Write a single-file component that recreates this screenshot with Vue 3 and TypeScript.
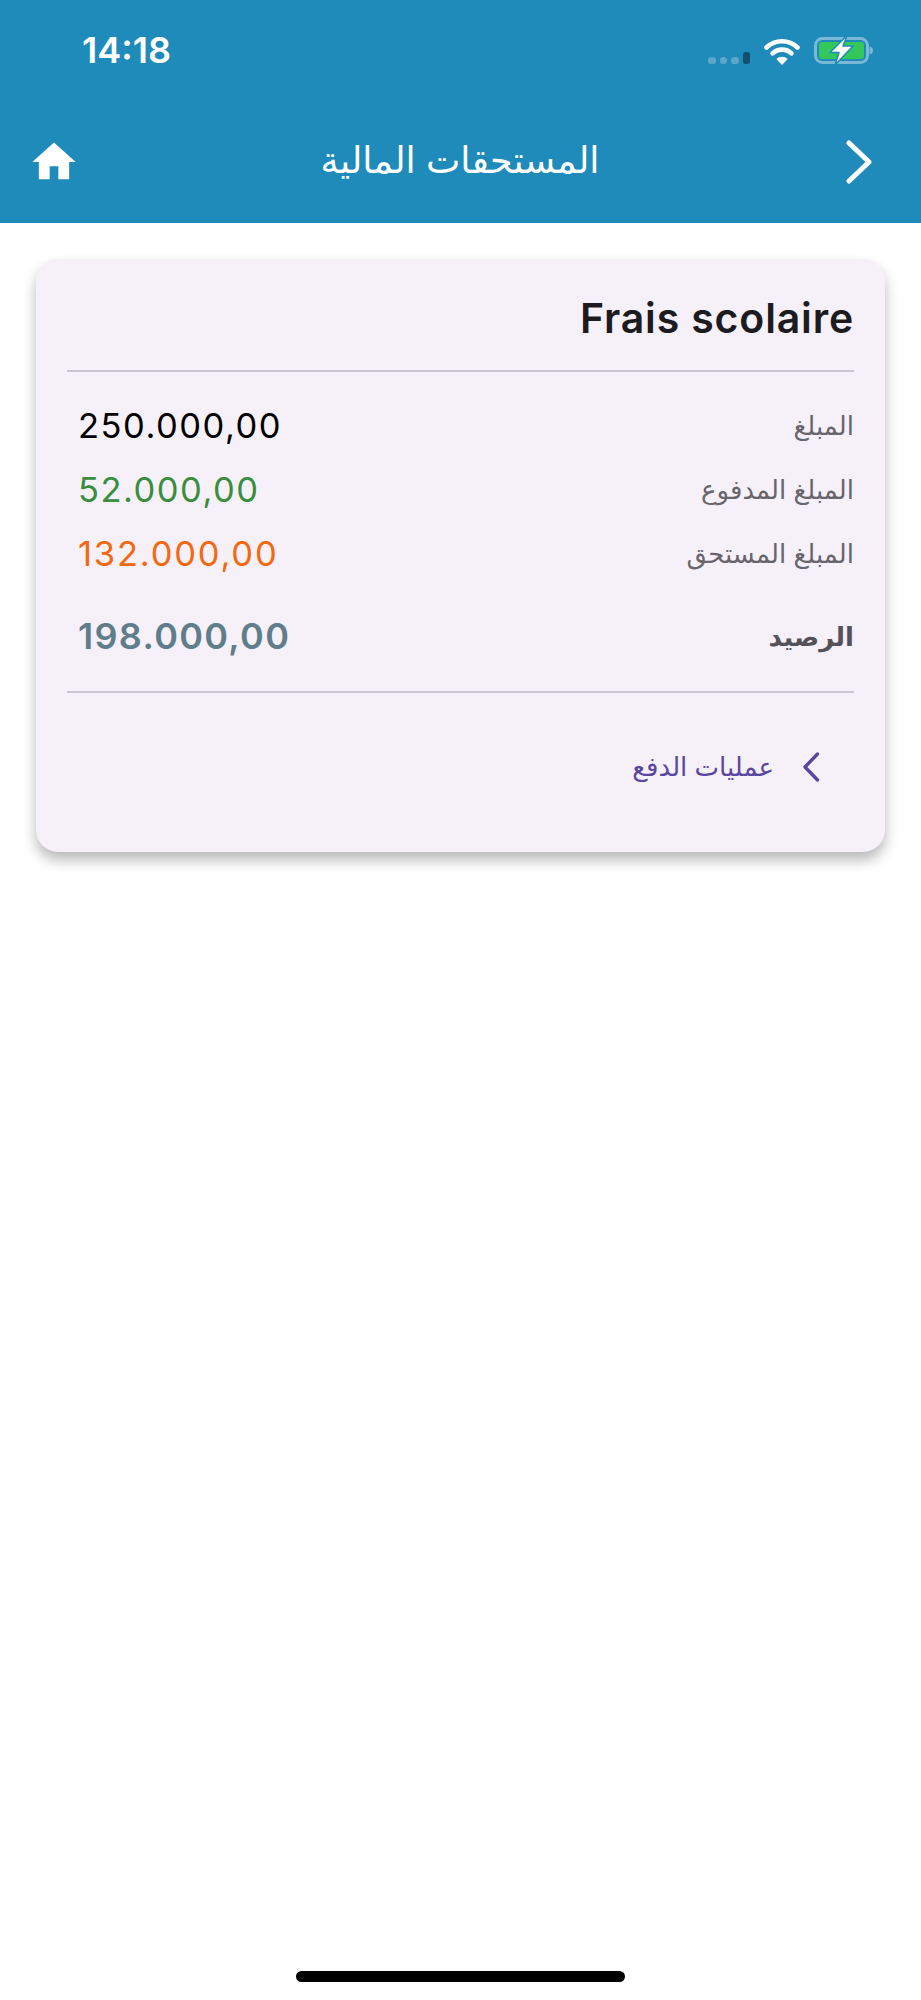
<script setup lang="ts">
interface FeeRow {
  label: string;
  value: string;
  tone: string;
}

const rows: FeeRow[] = [
  { label: "المبلغ", value: "250.000,00", tone: "black" },
  { label: "المبلغ المدفوع", value: "52.000,00", tone: "green" },
  { label: "المبلغ المستحق", value: "132.000,00", tone: "orange" },
];
</script>

<template>
  <div class="page" dir="rtl">
    <header class="appbar">
      <div class="status" dir="ltr">
        <span class="time">14:18</span>
        <div class="status-icons">
          <div class="signal">
            <i></i><i></i><i></i><i class="on"></i>
          </div>
          <svg class="wifi" width="36" height="27" viewBox="0 0 36 27">
            <path d="M2.500 9.500a22.500 22.500 0 0 1 31 0" fill="none" stroke="#fff" stroke-width="4.600" stroke-linecap="round" />
            <path d="M8.600 15.400a13.500 13.500 0 0 1 18.800 0" fill="none" stroke="#fff" stroke-width="4.600" stroke-linecap="round" />
            <path d="M12.300 21a8.600 8.600 0 0 1 11.400 0L18 27z" fill="#fff" />
          </svg>
          <svg class="battery" width="60" height="30" viewBox="0 0 60 30">
            <rect x="1.500" y="3.500" width="52" height="24" rx="7" fill="none" stroke="#7ab9d6" stroke-width="3" />
            <rect x="5" y="7" width="45" height="17" rx="3" fill="#34c759" />
            <path d="M55.500 11.500c2.500.5 3.500 2 3.500 4s-1 3.500-3.500 4z" fill="#7ab9d6" />
            <path d="M33 0.500 16 17.500h9L21 30l18-19h-10z" fill="#fff" stroke="#1e8bba" stroke-width="1.500" stroke-linejoin="round" />
          </svg>
        </div>
      </div>
      <div class="toolbar">
        <svg class="back" width="26" height="44" viewBox="0 0 26 44">
          <path d="M3 3l20 19L3 41" fill="none" stroke="#fff" stroke-width="5" stroke-linecap="round" stroke-linejoin="round" />
        </svg>
        <h1 class="title">المستحقات المالية</h1>
        <svg class="home" width="52" height="52" viewBox="0 0 24 24">
          <path d="M10 20v-6h4v6h5v-8h3L12 3 2 12h3v8z" fill="#fff" />
        </svg>
      </div>
    </header>

    <main class="content">
      <section class="card">
        <h2 class="card-title">Frais scolaire</h2>
        <div class="divider"></div>
        <div class="rows">
          <div v-for="row in rows" :key="row.label" class="row">
            <span class="label">{{ row.label }}</span>
            <span class="value" :class="row.tone" dir="ltr">{{ row.value }}</span>
          </div>
        </div>
        <div class="row balance">
          <span class="label">الرصيد</span>
          <span class="value slate" dir="ltr">198.000,00</span>
        </div>
        <div class="divider"></div>
        <div class="link">
          <svg width="18" height="30" viewBox="0 0 18 30">
            <path d="M15.500 2 3 15l12.500 13" fill="none" stroke="#5a46a2" stroke-width="3.400" stroke-linecap="round" stroke-linejoin="round" />
          </svg>
          <span>عمليات الدفع</span>
        </div>
      </section>
    </main>

    <div class="home-bar"></div>
  </div>
</template>

<style scoped>
.page {
  min-height: 2000px;
  width: 921px;
  display: flex;
  flex-direction: column;
  background: #fff;
  font-family: "Inter", "DejaVu Sans", sans-serif;
}
.appbar {
  height: 223px;
  background: #1e8bba;
  color: #fff;
  box-sizing: border-box;
}
.status {
  height: 100px;
  padding: 0 47px 0 82px;
  display: flex;
  justify-content: space-between;
  align-items: center;
}
.time {
  font-size: 36px;
  font-weight: 600;
}
.status-icons {
  display: flex;
  align-items: flex-end;
  gap: 14px;
}
.signal {
  display: flex;
  align-items: flex-end;
  gap: 4px;
  margin-bottom: 1px;
}
.signal i {
  width: 7.500px;
  height: 7px;
  border-radius: 3px;
  background: #5ba6c9;
}
.signal i.on {
  height: 12px;
  background: #14506c;
}
.toolbar {
  height: 123px;
  padding: 0 49px 0 28px;
  display: flex;
  align-items: center;
  justify-content: space-between;
}
.title {
  margin: 0 6px 4px 0;
  font-size: 36.500px;
  font-weight: 400;
}
.content {
  padding: 36px;
}
.card {
  background: #f6f1f9;
  border-radius: 22px;
  box-shadow: 0 8px 14px rgba(0, 0, 0, 0.28);
  height: 593px;
  box-sizing: border-box;
  padding: 44px 31px 0;
}
.card-title {
  margin: 0 0 37px;
  font-size: 41px;
  line-height: 30px;
  font-weight: 600;
  color: #1c1b1f;
  letter-spacing: 0.85px;
}
.divider {
  height: 2px;
  background: #cac4d0;
}
.rows {
  display: flex;
  flex-direction: column;
  gap: 24px;
  padding: 33px 0 0;
}
.row {
  height: 40px;
  display: flex;
  justify-content: space-between;
  align-items: center;
  padding-left: 11px;
}
.balance {
  margin: 43px 0 35px;
}
.label {
  font-size: 26px;
  color: #68656c;
}
.value {
  font-size: 34.500px;
  letter-spacing: 1.500px;
}
.black { color: #000; }
.green { color: #388e3c; }
.orange { color: #f4680f; letter-spacing: 1.800px; }
.slate { color: #607d8b; font-size: 36px; letter-spacing: 1.300px; font-weight: 600; }
.balance .label {
  font-weight: 700;
  color: #545158;
}
.link {
  display: flex;
  align-items: center;
  gap: 28px;
  padding: 58px 34px 0 0;
  color: #5a46a2;
  font-size: 26px;
}
.home-bar {
  width: 329px;
  height: 11px;
  margin: auto auto 18px;
  border-radius: 6px;
  background: #000;
}
</style>
